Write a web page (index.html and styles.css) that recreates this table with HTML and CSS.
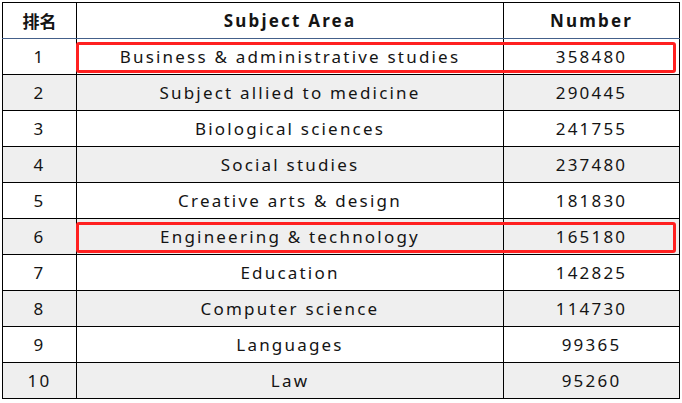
FILE: index.html
```html
<!DOCTYPE html>
<html>
<head>
<meta charset="utf-8">
<link rel="stylesheet" href="styles.css">
</head>
<body>
<table class="rank">
  <thead>
    <tr><th class="c1">排名</th><th class="c2">Subject Area</th><th class="c3">Number</th></tr>
  </thead>
  <tbody>
    <tr class="hl"><td>1</td><td>Business &amp; administrative studies</td><td>358480</td></tr>
    <tr class="alt"><td>2</td><td>Subject allied to medicine</td><td>290445</td></tr>
    <tr><td>3</td><td>Biological sciences</td><td>241755</td></tr>
    <tr class="alt"><td>4</td><td>Social studies</td><td>237480</td></tr>
    <tr><td>5</td><td>Creative arts &amp; design</td><td>181830</td></tr>
    <tr class="alt hl"><td>6</td><td>Engineering &amp; technology</td><td>165180</td></tr>
    <tr><td>7</td><td>Education</td><td>142825</td></tr>
    <tr class="alt"><td>8</td><td>Computer science</td><td>114730</td></tr>
    <tr><td>9</td><td>Languages</td><td>99365</td></tr>
    <tr class="alt"><td>10</td><td>Law</td><td>95260</td></tr>
  </tbody>
</table>
</body>
</html>
```

FILE: styles.css
```css
html, body {
  margin: 0;
  padding: 0;
  background: #ffffff;
}
.rank {
  margin: 2px 0 0 2px;
  border-collapse: collapse;
  table-layout: fixed;
  font-family: "Noto Sans", "Noto Sans CJK SC", sans-serif;
  color: #141414;
}
.rank th, .rank td {
  border: 1px solid #000;
  height: 35px;
  padding: 0;
  text-align: center;
  vertical-align: middle;
  font-size: 17px;
  letter-spacing: 2.2px;
  line-height: 20px;
}
.rank th {
  font-weight: bold;
  border-bottom: 1px solid #44608a;
}
.rank .c1 { width: 73px; }
.rank .c2 { width: 426px; }
.rank .c3 { width: 175px; }
.rank th.c1 {
  font-family: "Noto Sans CJK SC", sans-serif;
  letter-spacing: 0;
  font-size: 17px;
}
.rank tr.alt td { background: #efefef; }
.rank tr.hl td:nth-child(2) { position: relative; }
.rank tr.hl td:nth-child(2)::after {
  content: "";
  position: absolute;
  left: -1px;
  top: 3px;
  width: 594px;
  height: 25px;
  border: 3px solid #ff2020;
  border-radius: 3px;
  pointer-events: none;
}
```
